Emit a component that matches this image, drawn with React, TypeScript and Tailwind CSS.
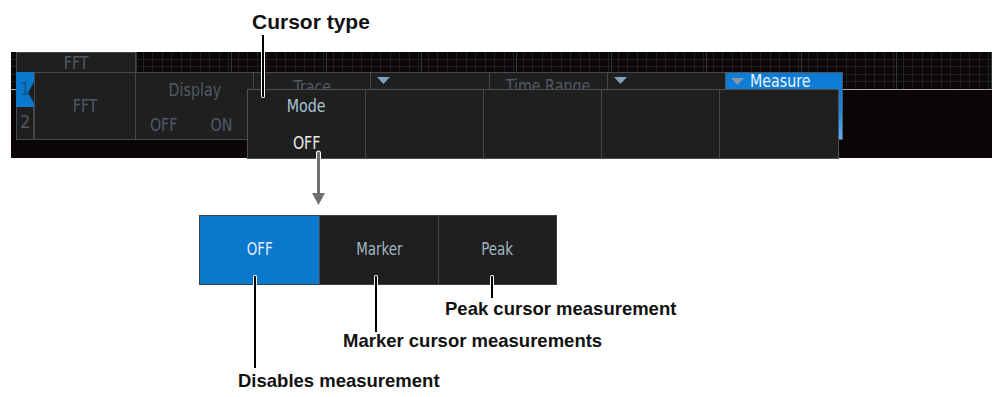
const scr = "font-['DejaVu_Sans_Condensed','DejaVu_Sans',sans-serif] font-stretch-condensed";
const sq = "inline-block scale-x-[0.88]";

function Arrow({ className }: { className: string }) {
  return (
    <svg className={className} width="13" height="8" viewBox="0 0 13 8">
      <polygon points="0,0 13,0 6.5,7" />
    </svg>
  );
}

function Cell({ w, children, className = "" }: { w: string; children?: React.ReactNode; className?: string }) {
  return (
    <div className={`${w} relative shrink-0 border-t border-b border-l border-[#45484e] bg-[#1f1f1f] ${className}`}>
      {children}
    </div>
  );
}

function Screen() {
  return (
    <div
      className={`relative ml-[11px] h-[106px] bg-[#0b0709] bg-no-repeat text-[18px] leading-none ${scr} [background-image:linear-gradient(#a9a9a9,#a9a9a9),repeating-linear-gradient(90deg,transparent_0,transparent_30px,#34343b_30px,#34343b_31px,transparent_31px,transparent_95px),repeating-linear-gradient(90deg,transparent_0,transparent_8.5px,#202024_8.5px,#202024_9.5px),repeating-linear-gradient(180deg,transparent_0,transparent_6.6px,#202024_6.6px,#202024_7.6px)] [background-size:100%_1px,100%_37px,100%_37px,100%_37px] [background-position:0_37px,0_0,0_0,0_0]`}
    >
      {/* tab strip */}
      <div className="flex h-[20px] pl-[5px]">
        <div className="flex w-[120px] items-center justify-center border border-b-0 border-[#45484e] bg-[#1f1f1f] pt-[1px] text-[#4f5a66]">
          <span className={sq}>FFT</span>
        </div>
      </div>

      {/* soft key row */}
      <div className="flex h-[68px] pl-[5px]">
        <div className="flex w-[18px] shrink-0 flex-col">
          <div className="relative h-[35px] bg-[#0a78cc]">
            <span className="absolute left-[4px] top-[8px] text-[#0a548f]">1</span>
            <svg className="absolute right-0 top-[10px]" width="6" height="21" viewBox="0 0 6 21">
              <polygon points="6,0 0,10.5 6,21" fill="#1f1f1f" />
            </svg>
          </div>
          <div className="flex-1 border border-t-0 border-[#45484e] bg-[#1f1f1f] pl-[3px] pt-[6px] text-[#4f5a66]">
            2
          </div>
        </div>
        <Cell w="w-[101px]" className="flex items-center justify-center text-[#4f5a66]">
          <span className={sq}>FFT</span>
        </Cell>
        <Cell w="w-[118px]" className="flex flex-col items-center pt-[8px] text-[#4f5a66]">
          <span className={sq}>Display</span>
          <div className="mt-[17px] flex w-full justify-between pl-[12px] pr-[19px]">
            <span className={sq}>OFF</span>
            <span className={sq}>ON</span>
          </div>
        </Cell>
        <Cell w="w-[117px]" className="flex justify-center pt-[5px] text-[#4f5a66]">
          <span className={sq}>Trace</span>
        </Cell>
        <Cell w="w-[119px]">
          <Arrow className="absolute left-[6px] top-[4px] fill-[#7fa2c2]" />
        </Cell>
        <Cell w="w-[118px]" className="flex justify-center pt-[4px] text-[#4f5a66]">
          <span className={sq}>Time Range</span>
        </Cell>
        <Cell w="w-[118px]">
          <Arrow className="absolute left-[6px] top-[4px] fill-[#7fa2c2]" />
        </Cell>
        <div className="relative w-[118px] shrink-0 border border-[#4a5868] bg-[linear-gradient(180deg,#0b7ad2_0%,#1684dc_55%,#63b2f6_100%)]">
          <Arrow className="absolute left-[5px] top-[5px] fill-[#8397ab]" />
          <span className={`absolute left-[24px] top-[-1px] origin-left text-[#eaf3fb] ${sq}`}>Measure</span>
        </div>
      </div>

      {/* mode popup */}
      <div className="absolute left-[236px] top-[37px] grid h-[70px] w-[592px] grid-cols-5 border border-[#4d5058] bg-[#1f1f1f]">
        <div className="flex flex-col items-center border-r border-[#45484e] pt-[7px]">
          <span className={`text-[#a8c4d3] ${sq}`}>Mode</span>
          <span className={`mt-[19px] text-[#ececec] ${sq}`}>OFF</span>
        </div>
        <div className="border-r border-[#45484e]" />
        <div className="border-r border-[#45484e]" />
        <div className="border-r border-[#45484e]" />
        <div />
      </div>
    </div>
  );
}

export default function App() {
  return (
    <div className="relative h-[397px] w-[992px] overflow-hidden bg-white font-['Liberation_Sans',Arial,sans-serif] text-[#111]">
      <div className="h-[52px] pl-[252px] pt-[10px]">
        <div className="text-[21px] font-bold leading-[24px]">Cursor type</div>
      </div>

      <Screen />

      <div className="h-[57px]" />

      <div className={`ml-[199px] flex h-[70px] w-[358px] border border-[#3e4248] text-[17px] ${scr}`}>
        <div className="flex w-[119px] items-center justify-center bg-[#0a78cc] text-[#e3edf5]">
          <span className={sq}>OFF</span>
        </div>
        <div className="flex w-[119px] items-center justify-center border-l border-[#45484e] bg-[#1f1f1f] text-[#a3b6c2]">
          <span className={sq}>Marker</span>
        </div>
        <div className="flex flex-1 items-center justify-center border-l border-[#45484e] bg-[#1f1f1f] text-[#a3b6c2]">
          <span className={sq}>Peak</span>
        </div>
      </div>

      <div className="mt-[13px] pl-[445px] text-[18.5px] font-bold leading-[22px]">Peak cursor measurement</div>
      <div className="mt-[10px] pl-[343px] text-[18.5px] font-bold leading-[22px]">Marker cursor measurements</div>
      <div className="mt-[18px] pl-[238px] text-[18.5px] font-bold leading-[22px]">Disables measurement</div>

      {/* callout lines */}
      <div className="absolute left-[261px] top-[35px] h-[63px] w-[4px] rounded-b-full border border-t-0 border-white bg-black" />
      <svg className="absolute left-[311px] top-[150px]" width="15" height="56" viewBox="0 0 15 56">
        <line x1="7.5" y1="3" x2="7.5" y2="8" stroke="#fff" strokeWidth="5" strokeLinecap="round" />
        <line x1="7.5" y1="3" x2="7.5" y2="44" stroke="#6e6e6e" strokeWidth="3" strokeLinecap="round" />
        <polygon points="1,43 14,43 7.5,55" fill="#6e6e6e" />
      </svg>
      <div className="absolute left-[253px] top-[275px] h-[93px] w-[4px] rounded-t-full border border-b-0 border-white bg-black" />
      <div className="absolute left-[374px] top-[275px] h-[57px] w-[4px] rounded-t-full border border-b-0 border-white bg-black" />
      <div className="absolute left-[490px] top-[275px] h-[23px] w-[4px] rounded-t-full border border-b-0 border-white bg-black" />
    </div>
  );
}
